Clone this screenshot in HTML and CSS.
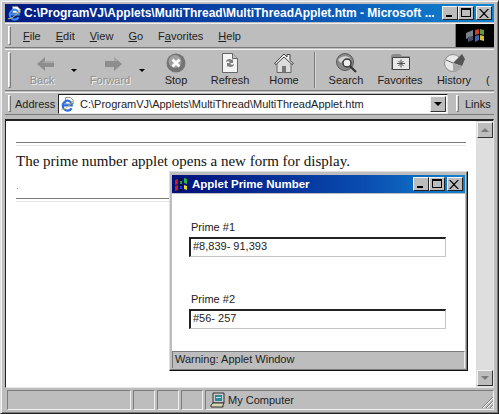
FILE: index.html
```html
<!DOCTYPE html>
<html lang="en">
<head>
    <meta charset="UTF-8">
    <title>MultiThreadApplet</title>
    <link rel="stylesheet" href="styles.css">
</head>
<body>

<div class="browser">
    <div class="titlebar">
        <svg class="ie-icon" width="15" height="16" viewBox="0 0 16 16">
            <path d="M6 1h5l3 3v4H6z" fill="#fff" stroke="#888"/>
            <path d="M3.500 9.500h9c0-3-2-5-4.500-5s-5 2.500-5 5.500 2.500 5 5 5c2 0 3.500-1 4.200-2.500" fill="none" stroke="#3c8cf0" stroke-width="2.400"/>
            <path d="M1 14c3 1 10-4 13-10" fill="none" stroke="#e8c860" stroke-width="1"/>
        </svg>
        <span class="title-text">C:\ProgramVJ\Applets\MultiThread\MultiThreadApplet.htm - Microsoft ...</span>
        <div class="caption-btns">
            <span class="cap-btn"><i class="cap-min"></i></span>
            <span class="cap-btn"><i class="cap-max"></i></span>
            <span class="cap-btn cap-close"><svg width="10" height="9" viewBox="0 0 10 9"><path d="M1 0l3.500 3.500L8 0h1.500L5.300 4.500 9.500 9H8L4.500 5.500 1 9H-.5l4.200-4.500L-.5 0z" transform="translate(.5 0)"/></svg></span>
        </div>
    </div>

    <div class="bar menubar">
        <span class="grip"></span>
        <nav class="menu">
            <a><u>F</u>ile</a>
            <a><u>E</u>dit</a>
            <a><u>V</u>iew</a>
            <a><u>G</u>o</a>
            <a>F<u>a</u>vorites</a>
            <a><u>H</u>elp</a>
        </nav>
        <div class="logo">
            <svg width="20" height="16" viewBox="0 0 20 16">
                <path d="M1 5l7-3v6l-7 3z" fill="#7a808c"/>
                <path d="M3 9l5-1v4l-5 2z" fill="#44506a"/>
                <path d="M10 2l4-1v5l-4 1z" fill="#c8402c"/>
                <path d="M15 1l4 1v5l-4-1z" fill="#5a9a48"/>
                <path d="M10 8l4-1v5l-4 2z" fill="#3a62b0"/>
                <path d="M15 7l4 1v5l-4-1z" fill="#dcbc34"/>
            </svg>
        </div>
    </div>

    <div class="bar toolbar">
        <span class="grip"></span>
        <div class="tool disabled tool-back">
            <svg class="nudge" width="17" height="16" viewBox="0 0 17 16"><path d="M0 8l8-7v4h9v6H8v4z" fill="#8e8e8e"/><path d="M8 5h9v2H5z" fill="#a8a8a8"/></svg>
            <span>Back</span>
        </div>
        <i class="caret"></i>
        <div class="tool disabled tool-forward">
            <svg class="nudge" width="17" height="16" viewBox="0 0 17 16"><path d="M17 8L9 1v4H0v6h9v4z" fill="#8e8e8e"/><path d="M0 5h9V1l4 4z" fill="#a8a8a8"/></svg>
            <span>Forward</span>
        </div>
        <i class="caret"></i>
        <div class="tool">
            <svg width="20" height="20" viewBox="0 0 20 20"><circle cx="10" cy="10" r="9.500" fill="#747474"/><circle cx="9" cy="8.500" r="6.500" fill="#a0a0a0"/><path d="M6.500 6.500l7 7M13.500 6.500l-7 7" stroke="#fff" stroke-width="2.800"/></svg>
            <span>Stop</span>
        </div>
        <div class="tool">
            <svg width="18" height="20" viewBox="0 0 18 20"><path d="M1.500.5h10l5 5v14h-15z" fill="#f4f4f4" stroke="#666"/><path d="M11.500.5v5h5" fill="#c4c4c4" stroke="#666"/><path d="M5 9c0-3 4-4 6-2l1-1v4H8l1-1c-1-1-3-1-4 0z" fill="#7c7c7c"/><path d="M13 11c0 3-4 4-6 2l-1 1v-4h4l-1 1c1 1 3 1 4 0z" fill="#7c7c7c"/></svg>
            <span>Refresh</span>
        </div>
        <div class="tool">
            <svg width="20" height="20" viewBox="0 0 20 20"><path d="M3 10l7-7 7 7v9.500H3z" fill="#dcdcdc" stroke="#666"/><path d="M.5 10.500L10 1l3 3V1.500h3v6l3.500 3-1.500 1L10 4 2 11.500z" fill="#f0f0f0" stroke="#444"/><path d="M8 13h4v6.500H8z" fill="#777"/></svg>
            <span>Home</span>
        </div>
        <span class="tool-sep"></span>
        <div class="tool">
            <svg width="21" height="20" viewBox="0 0 21 20"><circle cx="9" cy="9" r="8.500" fill="#8a8a8a" stroke="#5a5a5a"/><path d="M2 7c3-4 8-5 12-2l-3 2c-3-1-4 0-6 3z" fill="#d4d4d4"/><circle cx="11" cy="10" r="4" fill="#eee" stroke="#333" stroke-width="1.400"/><path d="M14 13l6 6" stroke="#333" stroke-width="2.200"/></svg>
            <span>Search</span>
        </div>
        <div class="tool">
            <svg width="21" height="18" viewBox="0 0 21 18"><path d="M1 4c0-2 1-3 3-3h5c2 0 2 1 3 2h8v14H1z" fill="#8c8c8c"/><path d="M2.500 4.500h17v12h-17z" fill="#e8e8e8" stroke="#444"/><path d="M11 6.500v8M7 10.500h8M8.500 8l5 5M13.500 8l-5 5" stroke="#555"/></svg>
            <span>Favorites</span>
        </div>
        <div class="tool">
            <svg width="21" height="19" viewBox="0 0 21 19"><circle cx="9" cy="10" r="8.500" fill="#e8e8e8" stroke="#8a8a8a"/><path d="M9 10l9-9 3 5-3 7z" fill="#555"/><path d="M9 10l9 3c-1 4-5 5.500-9 5.500z" fill="#a8a8a8"/><path d="M9 10L2 7" stroke="#666"/></svg>
            <span>History</span>
        </div>
        <div class="tool tool-cut">
            <span>(</span>
        </div>
    </div>

    <div class="bar addressbar">
        <span class="grip"></span>
        <label class="addr-label">Address</label>
        <div class="addr-field">
            <svg width="15" height="16" viewBox="0 0 16 16">
                <path d="M6 1h5l3 3v4H6z" fill="#fff" stroke="#888"/>
                <path d="M3.500 9.500h9c0-3-2-5-4.500-5s-5 2.500-5 5.500 2.500 5 5 5c2 0 3.500-1 4.200-2.500" fill="none" stroke="#2c6ee0" stroke-width="2.400"/>
                <path d="M1 14c3 1 10-4 13-10" fill="none" stroke="#e0b840" stroke-width="1"/>
            </svg>
            <span class="addr-text">C:\ProgramVJ\Applets\MultiThread\MultiThreadApplet.htm</span>
            <span class="sb-btn addr-drop"><i class="arrow-down"></i></span>
        </div>
        <span class="grip grip-links"></span>
        <span class="links">Links</span>
    </div>

    <div class="content">
        <div class="page">
            <hr>
            <p>The prime number applet opens a new form for display.</p>
            <span class="dot"></span>
            <hr>
        </div>
        <div class="scrollbar">
            <span class="sb-btn"><i class="arrow-up"></i></span>
            <span class="sb-btn"><i class="arrow-down"></i></span>
        </div>
    </div>

    <div class="statusbar">
        <span class="panel panel-main"></span>
        <span class="panel panel-small"></span>
        <span class="panel panel-small"></span>
        <span class="panel panel-small"></span>
        <span class="panel panel-zone">
            <svg width="16" height="16" viewBox="0 0 16 16">
                <path d="M3 1h11v10H3z" fill="#c8c8c8" stroke="#333"/>
                <path d="M5 3h7v6H5z" fill="#2a8a9a"/>
                <path d="M6 5h5v1H6z" fill="#bfe8f0"/>
                <path d="M1 13l2-2h11l-1 2v2H1z" fill="#d8d8b0" stroke="#333"/>
            </svg>
            My Computer
        </span>
        <svg class="resize" width="13" height="13" viewBox="0 0 13 13">
            <path d="M12 1L1 12M12 5l-7 7M12 9l-3 3" stroke="#7b7b7b"/>
            <path d="M12 2L2 12M12 6l-6 6M12 10l-2 2" stroke="#fff"/>
        </svg>
    </div>
</div>

<div class="applet">
    <div class="applet-title">
        <svg width="16" height="15" viewBox="0 0 16 15">
            <path d="M1 3l3-1v5l-3 1z" fill="#d01818"/>
            <path d="M1 9l3-1v5l-3 1z" fill="#d01818"/>
            <path d="M5 1h3v13H5z" fill="#111"/>
            <path d="M6 4h2v3H6z" fill="#2f9a3a"/>
            <path d="M6 9h2v3H6z" fill="#2040c0"/>
            <path d="M10 1l3 1v5l-3-1z" fill="#30b040"/>
            <path d="M10 8l3 1v4l-3-1z" fill="#e8d820"/>
        </svg>
        <span class="title-text">Applet Prime Number</span>
        <div class="caption-btns">
            <span class="cap-btn"><i class="cap-min"></i></span>
            <span class="cap-btn"><i class="cap-max"></i></span>
            <span class="cap-btn cap-close"><svg width="10" height="9" viewBox="0 0 10 9"><path d="M1 0l3.500 3.500L8 0h1.500L5.300 4.500 9.500 9H8L4.500 5.500 1 9H-.5l4.200-4.500L-.5 0z" transform="translate(.5 0)"/></svg></span>
        </div>
    </div>
    <div class="applet-body">
        <label>Prime #1</label>
        <div class="field">#8,839- 91,393</div>
        <label class="second">Prime #2</label>
        <div class="field">#56- 257</div>
    </div>
    <div class="applet-status">Warning: Applet Window</div>
</div>

</body>
</html>
```

FILE: styles.css
```css
html, body {
    margin: 0;
    padding: 0;
    width: 499px;
    height: 414px;
    overflow: hidden;
}
body {
    font-family: "Liberation Sans", Arial, sans-serif;
    font-size: 11px;
    color: #000;
    background-color: #bdbdbd;
    position: relative;
}
.browser {
    box-sizing: border-box;
    width: 499px;
    height: 414px;
    padding: 4px 4px 3px;
    display: flex;
    flex-direction: column;
    background-color: #bdbdbd;
    border: 1px solid;
    border-color: #dedede #222 #222 #dedede;
    box-shadow: inset 1px 1px 0 #f4f4f4, inset -1px -1px 0 #7b7b7b;
}
.titlebar {
    flex: 0 0 18px;
    margin-top: -1px;
    display: flex;
    align-items: center;
    padding: 0 2px 0 2px;
    background: linear-gradient(to right, #001a80, #0a4cb0 55%, #1084d0);
    color: #fff;
}
.ie-icon {
    margin-right: 2px;
    flex: none;
}
.title-text {
    font-weight: bold;
    font-size: 12px;
    white-space: nowrap;
    flex: 1;
}
.caption-btns {
    display: flex;
    flex: none;
}
.cap-btn {
    box-sizing: border-box;
    width: 16px;
    height: 14px;
    background-color: #bdbdbd;
    border: 1px solid;
    border-color: #f4f4f4 #222 #222 #f4f4f4;
    display: flex;
    position: relative;
}
.cap-close {
    margin-left: 2px;
    align-items: center;
    justify-content: center;
}
.cap-min {
    width: 6px;
    height: 2px;
    background-color: #000;
    margin: 8px 0 0 3px;
}
.cap-max {
    box-sizing: border-box;
    width: 10px;
    height: 9px;
    border: 1px solid #000;
    border-top-width: 2px;
    margin: 1px 0 0 2px;
}
.bar {
    display: flex;
    align-items: center;
    border-top: 1px solid #f0f0f0;
    border-bottom: 1px solid #7b7b7b;
    box-sizing: border-box;
}
.grip {
    flex: none;
    width: 3px;
    align-self: stretch;
    margin: 2px 0 2px 3px;
    background-color: #d6d6d6;
    border-right: 1px solid #7b7b7b;
    border-bottom: 1px solid #7b7b7b;
    border-left: 1px solid #fff;
    border-top: 1px solid #fff;
    box-sizing: border-box;
}
.menubar {
    height: 25px;
    margin-top: 1px;
}
.menu {
    display: flex;
    margin-left: 12px;
    gap: 15px;
    flex: 1;
    color: #222;
}
.logo {
    flex: none;
    width: 38px;
    height: 23px;
    background-color: #000;
    border-left: 1px solid #7b7b7b;
    display: flex;
    align-items: center;
    justify-content: center;
}
.toolbar {
    height: 42px;
    margin-top: 1px;
    overflow: hidden;
}
.tool {
    flex: none;
    width: 54px;
    height: 40px;
    display: flex;
    flex-direction: column;
    align-items: center;
    justify-content: space-between;
    color: #222;
    padding: 3px 0 4px;
    box-sizing: border-box;
}
.tool.disabled span {
    color: #8e8e8e;
    text-shadow: 1px 1px 0 #f0f0f0;
}
.tool-back {
    margin-left: 4px;
}
.tool-forward {
    margin-left: 2px;
}
.nudge {
    margin: 3px 0 0 7px;
}
.tool-cut {
    justify-content: flex-end;
    align-items: flex-start;
    width: 6px;
    margin-left: 5px;
}
.caret {
    flex: none;
    width: 0;
    height: 0;
    margin: 0 4px 0 2px;
    border: 3px solid transparent;
    border-top: 3px solid #000;
    border-bottom: 0;
}
.tool-sep {
    flex: none;
    width: 2px;
    height: 36px;
    margin: 0 3px;
    background-color: #d6d6d6;
    border-left: 1px solid #7b7b7b;
    box-sizing: border-box;
}
.addressbar {
    height: 23px;
    margin-top: 1px;
}
.addr-label {
    flex: none;
    width: 43px;
    margin-left: 4px;
    color: #222;
}
.addr-field {
    box-sizing: border-box;
    flex: none;
    width: 390px;
    height: 20px;
    display: flex;
    align-items: center;
    background-color: #fff;
    border: 1px solid;
    border-color: #222 #e6e6e6 #e6e6e6 #222;
    padding-left: 1px;
    color: #222;
}
.addr-text {
    flex: 1;
    margin-left: 5px;
    white-space: nowrap;
}
.addr-drop {
    margin-right: 1px;
}
.grip-links {
    margin-left: 8px;
}
.links {
    margin-left: 6px;
    color: #222;
}
.sb-btn {
    box-sizing: border-box;
    flex: none;
    width: 16px;
    height: 16px;
    background-color: #bdbdbd;
    border: 1px solid;
    border-color: #f4f4f4 #333 #333 #f4f4f4;
    display: flex;
    align-items: center;
    justify-content: center;
}
.arrow-down, .arrow-up {
    width: 0;
    height: 0;
    border: 4px solid transparent;
    border-bottom: 0;
    border-top: 4px solid #000;
}
.arrow-up {
    border-top: 0;
    border-bottom: 4px solid #7b7b7b;
}
.scrollbar .arrow-down {
    border-top-color: #7b7b7b;
}
.content {
    flex: 1;
    display: flex;
    margin-top: 4px;
    min-height: 0;
    background-color: #fff;
    border-top: 2px solid #222;
    border-left: 1px solid #222;
    border-right: 1px solid #e6e6e6;
    border-bottom: 1px solid #e6e6e6;
}
.page {
    flex: 1;
    padding: 21px 10px 0 10px;
    font-family: "Liberation Serif", "Times New Roman", serif;
    font-size: 15px;
    color: #111;
}
.page hr {
    margin: 0;
    height: 2px;
    border: 0;
    border-top: 1px solid #7b7b7b;
    border-bottom: 1px solid #e6e6e6;
}
.page p {
    margin: 5px 0 0;
    line-height: 20px;
}
.dot {
    display: block;
    width: 1px;
    height: 1px;
    margin: 17px 0 9px 1px;
    background-color: #999;
}
.scrollbar {
    flex: none;
    width: 17px;
    display: flex;
    flex-direction: column;
    justify-content: space-between;
    padding: 1px 0 1px 1px;
    box-sizing: border-box;
    background-color: #dedede;
}
.statusbar {
    flex: 0 0 21px;
    display: flex;
    align-items: stretch;
    gap: 2px;
    margin-top: 1px;
    padding-top: 1px;
    box-sizing: border-box;
    position: relative;
}
.panel {
    box-sizing: border-box;
    border: 1px solid;
    border-color: #7b7b7b #f0f0f0 #f0f0f0 #7b7b7b;
}
.panel-main {
    width: 124px;
    margin-left: 2px;
}
.panel-small {
    width: 22px;
}
.panel-zone {
    flex: 1;
    display: flex;
    align-items: center;
    gap: 2px;
    padding-left: 4px;
    color: #222;
}
.resize {
    position: absolute;
    right: 0;
    bottom: 1px;
}
/* floating applet window */
.applet {
    position: absolute;
    left: 169px;
    top: 171px;
    box-sizing: border-box;
    width: 299px;
    height: 200px;
    padding: 3px 2px 2px;
    display: flex;
    flex-direction: column;
    background-color: #bdbdbd;
    border: 1px solid;
    border-color: #dedede #111 #111 #dedede;
    box-shadow: inset -1px -1px 0 #7b7b7b;
}
.applet-title {
    flex: 0 0 18px;
    display: flex;
    align-items: center;
    padding: 0 2px 0 2px;
    background: linear-gradient(to right, #00107a, #0a4cb0 65%, #1084d0);
    color: #fff;
}
.applet-title svg:first-child {
    margin-right: 2px;
    flex: none;
}
.applet-title .title-text {
    font-size: 11.5px;
}
.applet-body {
    flex: 1;
    display: flex;
    flex-direction: column;
    align-items: flex-start;
    background-color: #fff;
    margin-top: 1px;
    padding: 25px 0 0 17px;
}
.applet-body label {
    margin-left: 2px;
    line-height: 16px;
    color: #222;
}
.applet-body .second {
    margin-top: 34px;
}
.field {
    box-sizing: border-box;
    width: 257px;
    height: 20px;
    margin-top: 2px;
    padding-left: 2px;
    line-height: 15px;
    background-color: #fff;
    color: #222;
    border: 1px solid;
    border-width: 2px 1px 1px 2px;
    border-color: #222 #c4c4c4 #c4c4c4 #222;
}
.applet-status {
    flex: 0 0 17px;
    box-sizing: border-box;
    line-height: 15px;
    padding-left: 2px;
    color: #222;
    border-top: 1px solid #7b7b7b;
    border-left: 1px solid #7b7b7b;
    border-right: 1px solid #f0f0f0;
}
```
